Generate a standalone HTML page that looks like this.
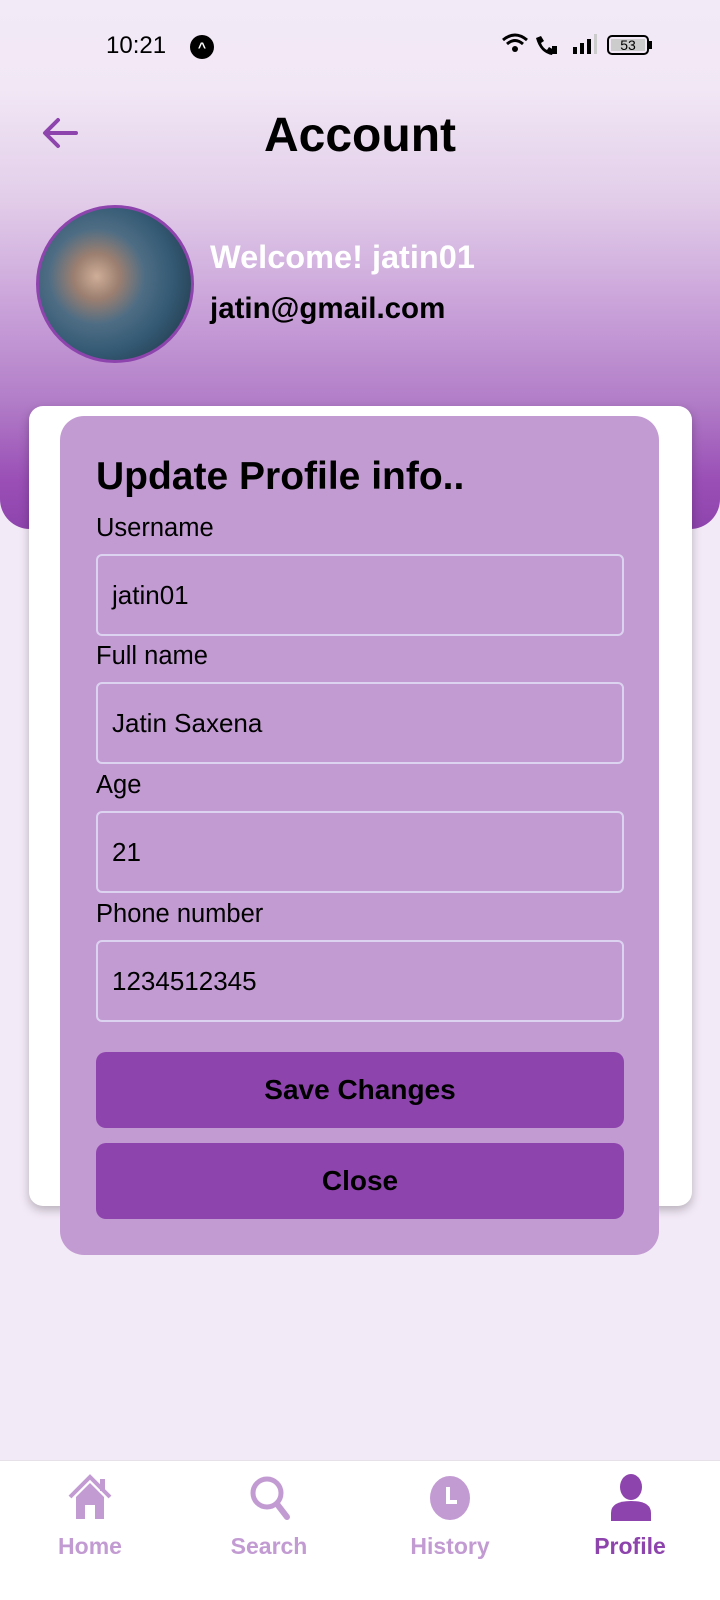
<!DOCTYPE html>
<html><head><meta charset="utf-8"><style>
*{margin:0;padding:0;box-sizing:border-box}
body{width:720px;height:1600px;position:relative;overflow:hidden;background:#f3eaf7;font-family:"Liberation Sans",Roboto,sans-serif;color:#000}
.hdr{position:absolute;left:0;top:0;width:720px;height:529px;border-radius:0 0 30px 30px;background:linear-gradient(180deg,#f3eaf7 0px,#f1e7f5 90px,#e2cde9 200px,#c9a1d9 310px,#b27ec8 400px,#9a4fb6 480px,#8e44ad 529px)}
.abs{position:absolute}
.card{left:29px;top:406px;width:663px;height:800px;background:#fff;border-radius:14px;box-shadow:0 4px 10px rgba(0,0,0,.25)}
.modal{left:60px;top:416px;width:599px;height:839px;background:#c39bd3;border-radius:24px}
.lbl{position:absolute;left:96px;font-size:25.5px}
.inp{position:absolute;left:96px;width:528px;height:82px;border:2px solid #dcd3f0;border-radius:6px;font-size:26px;padding-left:14px;line-height:78px}
.btn{position:absolute;left:96px;width:528px;height:76px;background:#8e44ad;border-radius:10px;font-size:28px;font-weight:bold;text-align:center;line-height:76px}
.nav{left:0;top:1460px;width:720px;height:140px;background:#fff;border-top:1px solid #e6e0e8}
.nl{position:absolute;top:72px;width:140px;text-align:center;font-size:23px;font-weight:bold;color:#c39bd3}
</style></head><body>
<div class="hdr"></div>
<div class="abs" style="left:106px;top:32px;font-size:24px">10:21</div>
<div class="abs" style="left:190px;top:35px;width:24px;height:24px;border-radius:50%;background:#000;color:#fff;font-size:14px;text-align:center;line-height:24px;font-weight:bold">^</div>
<svg class="abs" style="left:500px;top:30px" width="170" height="30" viewBox="0 0 170 30">
<path d="M3 10 Q15 0 27 10" stroke="#000" stroke-width="3" fill="none"/><path d="M7 14 Q15 7 23 14" stroke="#000" stroke-width="3" fill="none"/><circle cx="15" cy="19" r="3"/>
<path d="M36 8 l5 -2 l3 5 l-3 2 q2 5 6 7 l2 -3 l5 3 l-2 5 q-12 -2 -16 -17z"/><rect x="52" y="16" width="5" height="8"/>
<rect x="73" y="17" width="4" height="7"/><rect x="80" y="13" width="4" height="11"/><rect x="87" y="9" width="4" height="15"/><rect x="94" y="4" width="3" height="20" fill="#ccc"/>
<rect x="108" y="6" width="40" height="18" rx="4" fill="none" stroke="#000" stroke-width="2"/><rect x="111" y="9" width="34" height="12" fill="#ccc"/><rect x="149" y="11" width="3" height="8"/>
<text x="128" y="20" font-size="14" text-anchor="middle" font-family="Liberation Sans">53</text></svg>
<svg class="abs" style="left:40px;top:114px" width="40" height="40" viewBox="0 0 40 40"><path d="M36 19 H6 M18 6 L5 19 L18 32" stroke="#8e44ad" stroke-width="4" fill="none" stroke-linecap="round" stroke-linejoin="round"/></svg>
<div class="abs" style="left:0;width:720px;top:108px;text-align:center;font-size:48px;font-weight:bold">Account</div>
<div class="abs" style="left:36px;top:205px;width:158px;height:158px;border-radius:50%;border:3px solid #8e44ad;background:radial-gradient(circle at 38% 45%,#cfae98 0,#9c7f70 18%,#4e6d84 38%,#345a74 60%,#1a2c3a 100%)"></div>
<div class="abs" style="left:210px;top:239px;font-size:32.5px;font-weight:bold;color:#fff">Welcome! jatin01</div>
<div class="abs" style="left:210px;top:292px;font-size:29.5px;font-weight:bold">jatin@gmail.com</div>
<div class="abs card"></div>
<div class="abs modal"></div>
<div class="abs" style="left:96px;top:455px;font-size:39px;font-weight:bold">Update Profile info..</div>
<div class="lbl" style="top:514px">Username</div>
<div class="inp" style="top:554px">jatin01</div>
<div class="lbl" style="top:642px">Full name</div>
<div class="inp" style="top:682px">Jatin Saxena</div>
<div class="lbl" style="top:771px">Age</div>
<div class="inp" style="top:811px">21</div>
<div class="lbl" style="top:900px">Phone number</div>
<div class="inp" style="top:940px">1234512345</div>
<div class="btn" style="top:1052px">Save Changes</div>
<div class="btn" style="top:1143px">Close</div>
<div class="abs nav">
<svg class="abs" style="left:66px;top:12px" width="48" height="48" viewBox="0 0 48 48"><path d="M4 24 L24 4 L44 24" stroke="#c39bd3" stroke-width="4" fill="none"/><rect x="34" y="6" width="5" height="12" fill="#c39bd3"/><path d="M10 24 L24 10 L38 24 V46 H29 V32 H19 V46 H10Z" fill="#c39bd3"/></svg>
<svg class="abs" style="left:247px;top:12px" width="48" height="50" viewBox="0 0 48 50"><circle cx="20" cy="20" r="14" stroke="#c39bd3" stroke-width="5" fill="none"/><path d="M30 31 L40 44" stroke="#c39bd3" stroke-width="6" stroke-linecap="round"/></svg>
<svg class="abs" style="left:428px;top:14px" width="44" height="46" viewBox="0 0 44 46"><ellipse cx="22" cy="23" rx="20" ry="22" fill="#c39bd3"/><path d="M20 12 V27 H29" stroke="#fff" stroke-width="4" fill="none"/></svg>
<svg class="abs" style="left:610px;top:12px" width="42" height="50" viewBox="0 0 42 50"><ellipse cx="21" cy="14" rx="11" ry="13" fill="#8e44ad"/><path d="M1 48 V40 Q1 28 21 28 Q41 28 41 40 V48Z" fill="#8e44ad"/></svg>
<div class="nl" style="left:20px">Home</div>
<div class="nl" style="left:199px">Search</div>
<div class="nl" style="left:380px">History</div>
<div class="nl" style="left:560px;color:#8e44ad">Profile</div>
</div>
</body></html>
